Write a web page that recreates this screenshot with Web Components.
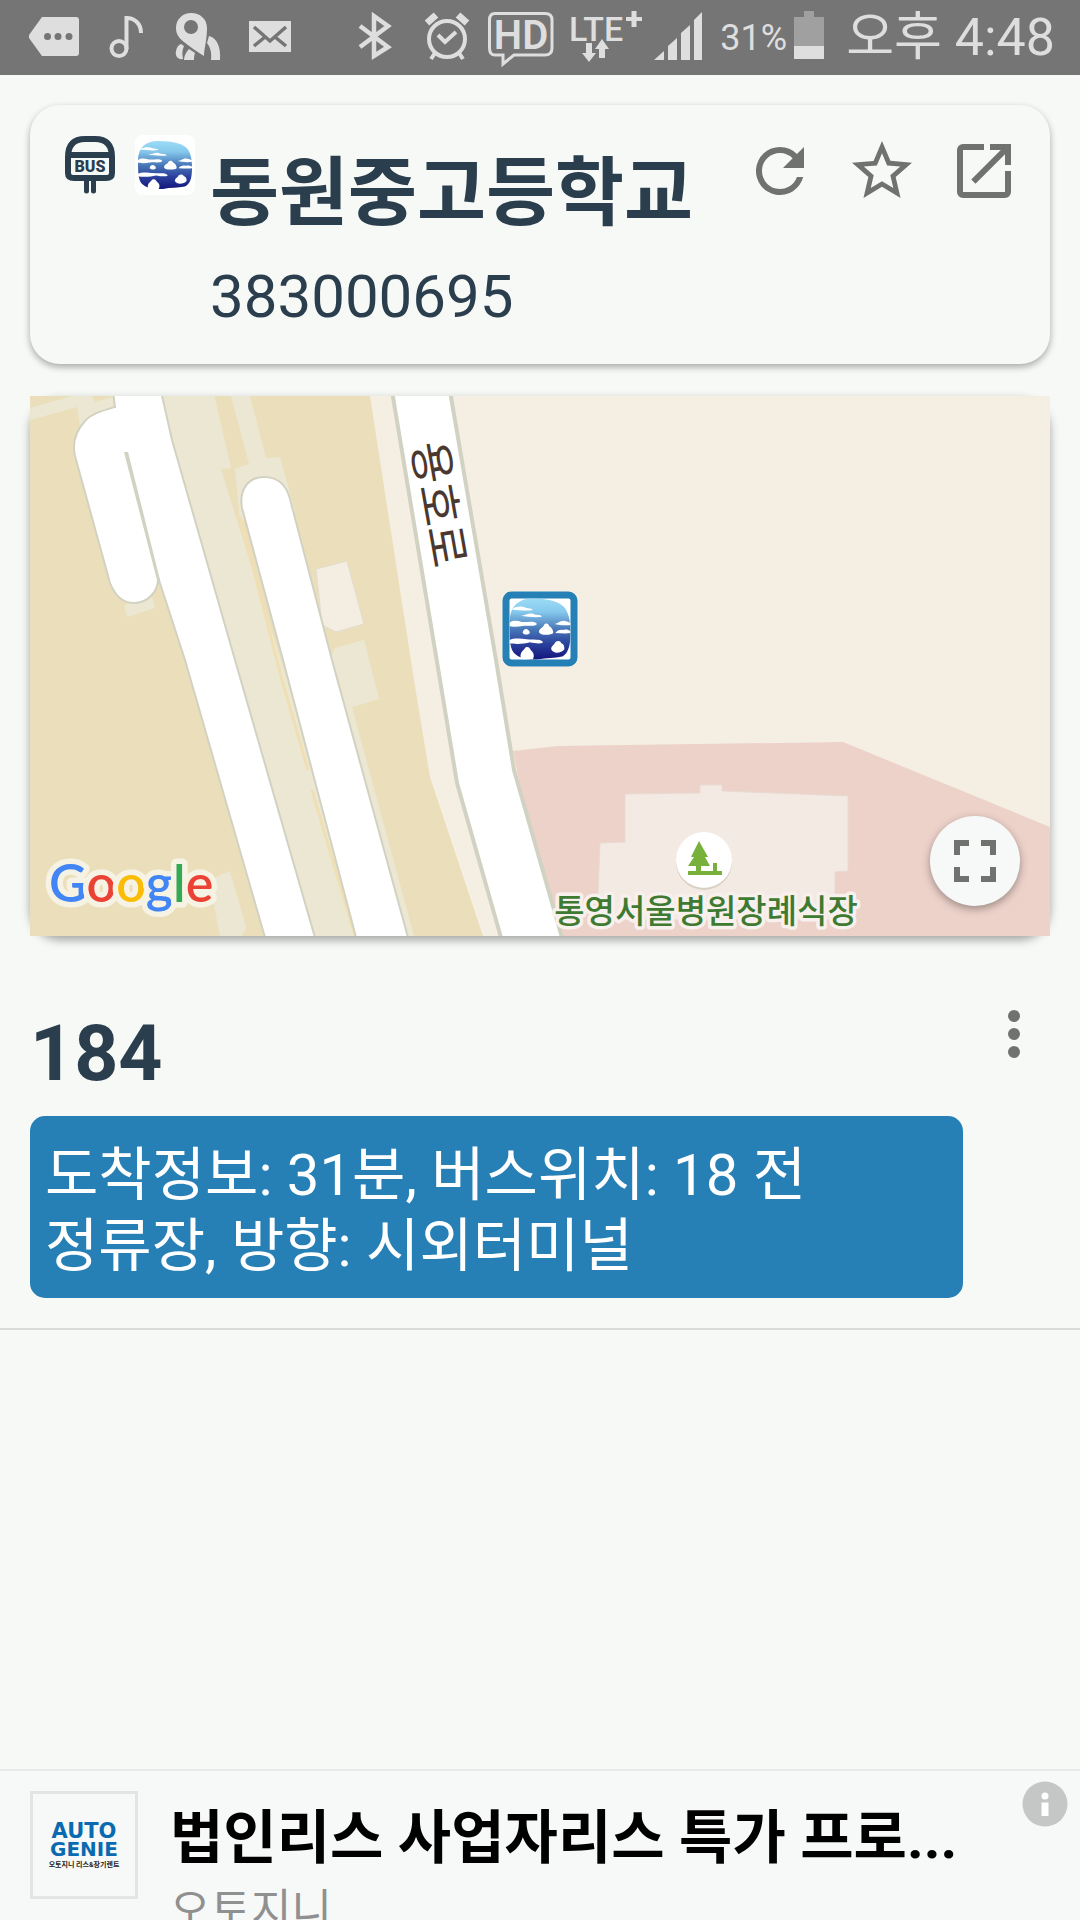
<!DOCTYPE html>
<html lang="ko">
<head>
<meta charset="utf-8">
<meta name="viewport" content="width=device-width, initial-scale=1">
<title>동원중고등학교</title>
<style>
  html, body { margin: 0; height: 100%; }
  body {
    background: #f7f9f6;
    color: #2a3e4e;
    font-family: Roboto, "Noto Sans CJK KR", sans-serif;
  }
</style>
</head>
<body>
<bus-app></bus-app>

<script>
const define = (name, html) => {
  const template = document.createElement('template');
  template.innerHTML = html;
  customElements.define(name, class extends HTMLElement {
    constructor() {
      super();
      this.attachShadow({ mode: 'open' }).append(template.content.cloneNode(true));
    }
  });
};

/* Round or flat button that holds one icon */
define('icon-button', `
  <style>
    :host { display: block; flex: none; }
    button {
      display: flex; align-items: center; justify-content: center;
      padding: 0; border: 0; color: #70726f; cursor: pointer;
      width: var(--size, 72px); height: var(--size, 72px);
      background: var(--fill, none); border-radius: 50%;
      box-shadow: var(--lift, none);
    }
    ::slotted(svg) { width: 72px; height: 72px; fill: currentColor; display: block; }
  </style>
  <button type="button"><slot></slot></button>
`);

/* Emblem of the city: sea, clouds and islands */
define('city-emblem', `
  <style>
    :host { display: flex; background: #fff; box-sizing: border-box; }
    svg { display: block; width: 100%; height: 100%; }
  </style>
  <svg viewBox="0 0 60 60" preserveAspectRatio="none" aria-hidden="true">
    <defs>
      <linearGradient id="sea" x1="0" y1="0" x2="0" y2="1">
        <stop offset="0" stop-color="#9adcf6"/>
        <stop offset=".22" stop-color="#86c8ec"/>
        <stop offset=".5" stop-color="#4878b8"/>
        <stop offset=".75" stop-color="#2a3f9b"/>
        <stop offset="1" stop-color="#14157c"/>
      </linearGradient>
    </defs>
    <path fill="url(#sea)" d="M22 0C40 0 51 4 55 10C59 16 60 24 60 34C60 46 58 54 52 57C44 59 36 58 28 60C18 61 8 58 4 53C0 48 0 36 0 24C0 8 9 0 22 0Z"/>
    <g fill="#fff">
      <path d="M3 10C6 8 12 7 16 9C19 10 21 9 23 11C18 13 8 11 3 11Z"/>
      <path d="M11 17C15 17 19 14 23 15C27 17 30 15 32 18C26 19 17 18 11 17Z"/>
      <path d="M0 24C3 21 8 22 12 23C17 24 24 21 27 25C25 28 18 26 13 27C8 28 2 28 0 27Z"/>
      <path d="M13 34C13 31 15 30 16 30C18 30 20 32 20 34C18 36 15 36 13 34Z"/>
      <path d="M29 33C29 29 33 29 34 26C35 24 38 24 39 27C42 29 43 31 43 34C42 36 30 37 29 33Z"/>
      <path d="M44 25C48 25 49 22 53 22C56 22 57 23 60 24V26C54 27 49 26 44 25Z"/>
      <path d="M45 34C47 31 50 30 53 31C56 30 58 31 60 32V34C55 35 50 34 45 34Z"/>
      <path d="M0 41C5 38 12 40 17 40C23 41 31 39 33 43C31 45 25 44 20 43C14 45 5 45 0 44Z"/>
      <path d="M41 50C41 46 44 46 45 43C48 41 50 42 51 44C54 45 54 48 54 50C51 54 43 55 41 50Z"/>
      <path d="M11 58C10 53 14 51 16 48C19 47 20 49 21 51C25 54 24 58 23 60H12Z"/>
    </g>
  </svg>
`);

define('status-bar', `
  <style>
    :host {
      display: flex; justify-content: space-between; flex: none;
      height: 75px; padding: 0 25px 0 24px; overflow: hidden;
      background: #757575; color: #dedede;
    }
    div { display: flex; align-items: center; }
    svg { display: block; height: 75px; flex: none; fill: currentColor; }
    .s { fill: none; stroke: currentColor; }
    .battery { font-size: 36px; margin: 0 2px 0 8px; }
    time { font-size: 52px; line-height: 75px; margin-left: 17px; }
  </style>
  <div>
    <svg width="70" viewBox="24 0 70 75"><path d="M42 17H76Q79 17 79 20V53Q79 56 76 56H42L29 38V35Z"/><g fill="#757575"><circle cx="47.500" cy="36.500" r="3.500"/><circle cx="58" cy="36.500" r="3.500"/><circle cx="69" cy="36.500" r="3.500"/></g></svg>
    <svg width="66" viewBox="94 0 66 75"><circle class="s" cx="119" cy="48.500" r="7.500" stroke-width="4"/><path class="s" stroke-width="4" d="M126.500 49V18C134 18 141 23 141 33"/></svg>
    <svg width="74" viewBox="160 0 74 75"><path fill-rule="evenodd" d="M191 13C200 13 207 19 207 28C207 40 204 49 204 56C199 53 193 49 184 42C179 38 176 34 176 28C176 19 183 13 191 13ZM191 20A7 7 0 1 0 191 34A7 7 0 1 0 191 20Z"/><path d="M209 36C217 38 221 47 220 60H211C212 52 210 47 207 43ZM181 44L184 46C182 50 182 55 183 59C177 60 175 55 176 51C177 47 178 45 181 44ZM189 49L195 53C194 56 194 58 194 60H184C184 56 186 52 189 49Z"/></svg>
    <svg width="72" viewBox="234 0 72 75"><path d="M249 21H291V52H249Z"/><path fill="none" stroke="#757575" stroke-width="3.500" d="M254 27L270 41L286 27M254 46L265 37M286 46L275 37"/></svg>
  </div>
  <div>
    <svg width="60" viewBox="348 0 60 75"><path class="s" stroke-width="4.500" d="M360 26L388 47L374 56V16L388 26L360 47"/></svg>
    <svg width="72" viewBox="408 0 72 75"><circle class="s" cx="447" cy="39" r="18" stroke-width="4"/><path class="s" stroke-width="4" d="M438 35L445 42L456 32M435 53L431 59M459 53L463 59"/><path class="s" stroke-width="7" d="M427 23L436 15M467 23L458 15"/></svg>
    <svg width="82" viewBox="480 0 82 75"><path class="s" stroke-width="3" d="M495 13.500H545Q552 13.500 552 20V48Q552 55 545 55H514L503 64V55H495Q489.500 55 489.500 48V20Q489.500 13.500 495 13.500Z"/><text x="521" y="49" text-anchor="middle" font-size="40" font-weight="600">HD</text></svg>
    <svg width="86" viewBox="562 0 86 75"><text x="569" y="41" font-size="34" font-weight="500">LTE</text><path d="M631.500 11H636.500V17H642V21H636.500V27H631.500V21H626V17H631.500ZM586 43H592V53H596L589 62L582 53H586ZM599 58V49H595L602 39L609 49H605V58Z"/></svg>
    <svg width="64" viewBox="648 0 64 75"><path d="M654 60L664 51V60ZM668 60V46L677 38V60ZM681 60V33L690 25V60ZM694 60V20L702 12V60Z"/></svg>
    <span class="battery">31%</span>
    <svg width="40" viewBox="790 0 40 75"><path fill="#a0a0a0" d="M795 17H805V11H815V17H825V47H795Z"/><path d="M795 46H825V59H795Z"/></svg>
    <time>오후 4:48</time>
  </div>
`);

define('stop-header', `
  <style>
    :host {
      display: flex; align-items: flex-start; gap: 15px;
      padding: 30px; height: 199px; border-radius: 30px;
      background: #f7f9f6; box-shadow: 0 3px 7px rgba(0,0,0,.32);
    }
    .sign { width: 60px; height: 60px; flex: none; }
    city-emblem { width: 60px; height: 60px; flex: none; padding: 6px 3px; border-radius: 8px; }
    .name { flex: 1; min-width: 0; padding-top: 14px; }
    h1 { margin: 0; font-size: 75px; line-height: 88px; font-weight: 700; white-space: nowrap; }
    p { margin: 25px 0 0; font-size: 60px; line-height: 70px; }
    nav { display: flex; gap: 30px; }
  </style>
  <svg class="sign" viewBox="0 0 60 60" aria-hidden="true">
    <path fill="none" stroke="#2a3e4e" stroke-width="6" d="M8 20H52M8 22Q8 4 25 4H35Q52 4 52 22V38Q52 43 46 43H14Q8 43 8 38Z"/>
    <path fill="none" stroke="#2a3e4e" stroke-width="5" stroke-linecap="round" d="M26.500 44V56M33.500 44V56"/>
    <text x="30" y="37" text-anchor="middle" font-size="16" font-weight="900" fill="#2a3e4e">BUS</text>
  </svg>
  <city-emblem></city-emblem>
  <div class="name">
    <h1><slot name="title"></slot></h1>
    <p><slot name="code"></slot></p>
  </div>
  <nav>
    <icon-button><svg viewBox="0 0 24 24"><path d="M17.650 6.350A7.958 7.958 0 0 0 12 4a8 8 0 1 0 7.730 10h-2.080A6 6 0 1 1 12 6c1.660 0 3.140.690 4.220 1.780L13 11h7V4z"/></svg></icon-button>
    <icon-button><svg viewBox="0 0 24 24"><path d="M22 9.240l-7.190-.620L12 2 9.190 8.630 2 9.240l5.460 4.730L5.820 21 12 17.270 18.180 21l-1.630-7.030zM12 15.400l-3.760 2.270 1-4.280-3.320-2.880 4.380-.380L12 6.100l1.710 4.040 4.380.380-3.320 2.880 1 4.280z"/></svg></icon-button>
    <icon-button><svg viewBox="0 0 24 24"><path d="M19 19H5V5h7V3H5a2 2 0 0 0-2 2v14a2 2 0 0 0 2 2h14a2 2 0 0 0 2-2v-7h-2zM14 3v2h3.590l-9.830 9.830 1.410 1.410L19 6.410V10h2V3z"/></svg></icon-button>
  </nav>
`);

define('stop-map', `
  <style>
    :host {
      display: block; position: relative; height: 540px;
      border-radius: 30px; box-shadow: 0 4px 10px rgba(0,0,0,.34);
    }
    .tiles { display: block; width: 100%; height: 100%; background: #f5efe3; }
    .marker {
      position: absolute; left: 50%; top: 50%; transform: translate(-50%, -50%);
      width: 75px; height: 75px; margin-top: -37px;
      border: 7px solid #2580b6; border-radius: 9px;
    }
    icon-button {
      position: absolute; right: 30px; bottom: 30px;
      --size: 90px; --fill: #f7f9f8; --lift: 0 3px 8px rgba(0,0,0,.35);
    }
  </style>
  <svg class="tiles" viewBox="0 0 1020 540" preserveAspectRatio="xMidYMid slice">
    <path fill="#ebdfbb" d="M0 0H340L384 284L400 381L453 540H0Z"/>
    <g fill="#ece7d3">
      <path d="M0 12L42 0H62L65 6L83 1V20L50 30L47 11L0 24Z"/>
      <path d="M130 0H184.500L201 72L191 73L257 284L326 540H280Z"/>
      <path d="M201 0H220L236 62L250 61L265 115L210 125L205 73L219 68Z"/>
      <path d="M94 209L122 200L125 212L97 221Z"/>
      <path d="M305 252L334 244L349 303L322 311L384 540H370L300 262Z"/>
      <path d="M179 484L200 475L216 531L212 540H190Z"/>
    </g>
    <path fill="none" stroke="#f1dfb4" stroke-width="3" d="M210 121L252 284L278 374M282 394L325 540"/>
    <path fill="#f4ede1" stroke="#e2dccc" d="M286 173L317 165L334 228L306 236L292 229Z"/>
    <g fill="#fff" stroke="#d2d2c2" stroke-width="2">
      <path d="M83 -5L85 11C68 16 61 18 55 25C45 36 42 47 45 60L80 187C86 202 94 207 104 207C118 207 129 195 128 181L155 264L236 545H286L205 264L142 44L131 -5Z"/>
      <path d="M327 545L253 264L212 112C209 95 217 81 234 81C249 81 257 91 260 103L302 264L379 545Z"/>
    </g>
    <path fill="#d2d2c2" d="M94 56L98 56L130 184L127 184Z"/>
    <path fill="#edd2ca" d="M483 355L527 350L813 346L1020 431V540H520Z"/>
    <path fill="#f4eae4" stroke="#e8dad2" d="M595 398L670 397V389H692V395L818 400V475L805 476V524H570L568 497L570 447L595 446Z"/>
    <path fill="#fff" stroke="#d2d2c2" stroke-width="4" d="M362 -5L410 284L427 387L472 545H533L484 374L466 264L420 -5Z"/>
    <text transform="translate(393 111) rotate(80)" text-anchor="middle" font-size="46" fill="#4a3830">용호로</text>
    <circle cx="674" cy="466" r="28" fill="#d9cfc4"/>
    <circle cx="674" cy="464" r="28" fill="#fff"/>
    <path fill="#78b03c" d="M669 445L678 461H675L680 470H671V475H683V467H687V475H692V479H658V475H666V470H658L664 461H661Z"/>
    <text x="676" y="527" text-anchor="middle" font-size="33" font-weight="500" fill="#3f7a32" stroke="#f8f0ec" stroke-width="7" stroke-linejoin="round" paint-order="stroke">통영서울병원장례식장</text>
    <text x="19" y="506" font-family="Lato" font-size="52" font-weight="600" stroke="#f7f3e4" stroke-width="11" stroke-linejoin="round" paint-order="stroke"><tspan fill="#4285f4">G</tspan><tspan fill="#ea4335">o</tspan><tspan fill="#fbbc05">o</tspan><tspan fill="#4285f4">g</tspan><tspan fill="#34a853">l</tspan><tspan fill="#ea4335">e</tspan></text>
  </svg>
  <city-emblem class="marker"></city-emblem>
  <icon-button><svg viewBox="0 0 24 24"><path d="M7 14H5v5h5v-2H7zM5 10h2V7h3V5H5zM17 17h-3v2h5v-5h-2zM14 5v2h3v3h2V5z"/></svg></icon-button>
`);

define('route-item', `
  <style>
    :host {
      display: flex; align-items: flex-start; gap: 15px;
      padding: 62px 30px 30px; border-bottom: 2px solid #d9dbd9;
    }
    .body { flex: 1; min-width: 0; }
    h2 { margin: 12px 0 18px; font-size: 77px; line-height: 88px; font-weight: 700; }
    p {
      margin: 0; padding: 24px 15px 16px; border-radius: 15px; word-break: keep-all;
      background: #2680b6; color: #fff; font-size: 58px; line-height: 71px;
    }
  </style>
  <div class="body">
    <h2><slot name="number"></slot></h2>
    <p><slot></slot></p>
  </div>
  <icon-button><svg viewBox="0 0 24 24"><circle cx="12" cy="6" r="2"/><circle cx="12" cy="12" r="2"/><circle cx="12" cy="18" r="2"/></svg></icon-button>
`);

define('ad-banner', `
  <style>
    :host {
      display: flex; align-items: flex-start; flex: none; gap: 32px;
      box-sizing: border-box; height: 151px; padding: 20px 12px 0 30px; overflow: hidden;
      background: #f6f9f8; border-top: 2px solid #e9ebe8;
    }
    .logo { flex: none; width: 102px; height: 102px; border: 3px solid #e3e5e2; }
    .copy { flex: 1; min-width: 0; padding-top: 12px; }
    h3, p { margin: 0; white-space: nowrap; }
    h3 { font-size: 58px; line-height: 70px; font-weight: 700; color: #000; }
    p { font-size: 44px; line-height: 56px; color: #909090; margin-top: 10px; }
    .info { flex: none; width: 46px; height: 46px; margin-top: -10px; }
  </style>
  <svg class="logo" viewBox="0 0 102 102">
    <g text-anchor="middle" fill="#0a6ab0" font-family="DejaVu Sans" font-weight="700">
      <text x="51" y="44" font-size="21">AUTO</text><text x="51" y="62" font-size="20">GENIE</text>
    </g>
    <text x="51" y="73" text-anchor="middle" fill="#222" font-weight="700" font-size="7">오토지니 리스&amp;장기렌트</text>
  </svg>
  <div class="copy">
    <h3><slot name="headline"></slot></h3>
    <p><slot name="sponsor"></slot></p>
  </div>
  <svg class="info" viewBox="0 0 46 46"><circle cx="23" cy="23" r="22.500" fill="#c4c7c6"/><circle cx="23" cy="15" r="3.500" fill="#fff"/><path fill="#fff" d="M19.500 21.500H26.500V35H19.500Z"/></svg>
`);

define('bus-app', `
  <style>
    :host { display: flex; flex-direction: column; height: 100vh; overflow: hidden; }
    main { flex: 1; min-height: 0; overflow: hidden; padding-top: 30px; }
    stop-header, stop-map { margin: 0 30px; }
    stop-map { margin-top: 32px; }
    .line { display: inline-block; }
  </style>
  <status-bar></status-bar>
  <main>
    <stop-header>
      <span slot="title">동원중고등학교</span>
      <span slot="code">383000695</span>
    </stop-header>
    <stop-map></stop-map>
    <route-item>
      <span slot="number">184</span>도착정보: 31분, 버스위치: 18 전 정류장, 방향: 시외터미널
    </route-item>
  </main>
  <ad-banner>
    <span slot="headline">법인리스 사업자리스 특가 프로...</span>
    <span slot="sponsor">오토지니</span>
  </ad-banner>
`);
</script>
</body>
</html>
